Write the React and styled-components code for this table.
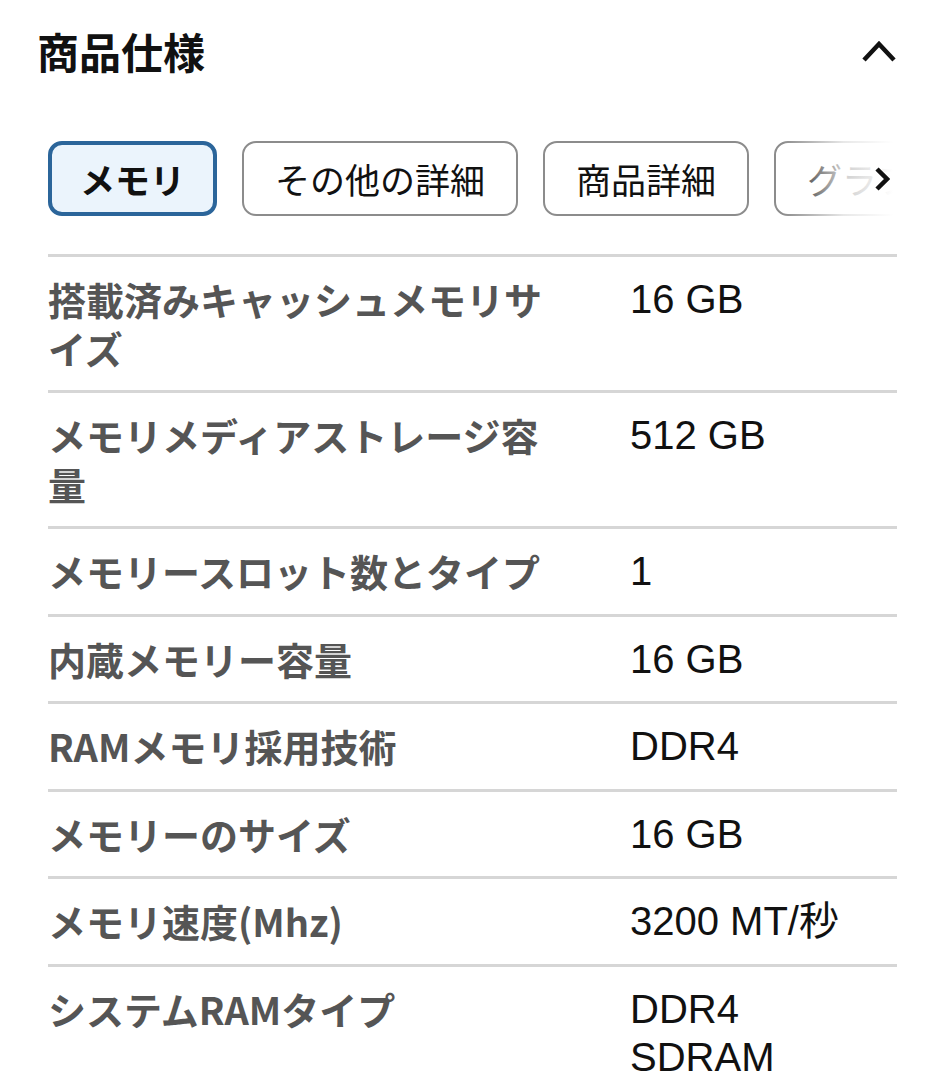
import React from "react";
import styled, { createGlobalStyle } from "styled-components";

const GlobalStyle = createGlobalStyle`
  html, body {
    margin: 0;
    padding: 0;
    background: #ffffff;
  }
  body {
    font-family: "Noto Sans CJK JP", "Noto Sans", sans-serif;
    color: #111111;
  }
`;

const Page = styled.div`
  width: 934px;
  box-sizing: border-box;
  padding: 0 37px 0 0;
`;

const Header = styled.div`
  display: flex;
  align-items: center;
  justify-content: space-between;
  height: 102px;
  padding-left: 37px;
`;

const Title = styled.h2`
  margin: 0;
  font-size: 42px;
  font-weight: 700;
  line-height: 1;
  color: #111111;
`;

const Body = styled.div`
  padding-left: 48px;
`;

const TabStrip = styled.div`
  position: relative;
  margin-top: 39px;
  width: 845px;
  overflow: hidden;
`;

const TabRow = styled.div`
  display: flex;
  gap: 25px;
  white-space: nowrap;
`;

const Tab = styled.button`
  flex: none;
  box-sizing: border-box;
  height: 75px;
  padding: 0 ${(p) => (p.$active ? "28px" : "31px")};
  border-radius: 14px;
  border: ${(p) => (p.$active ? "4px solid #2b659a" : "2px solid #8c8c8c")};
  background: ${(p) => (p.$active ? "#ebf4fc" : "#ffffff")};
  font-family: "Noto Sans CJK JP", sans-serif;
  font-size: 35px;
  font-weight: ${(p) => (p.$active ? 700 : 400)};
  color: #111111;
  line-height: 1;
`;

const Fade = styled.div`
  position: absolute;
  top: 0;
  right: 0;
  width: 110px;
  height: 100%;
  background: linear-gradient(to right, rgba(255, 255, 255, 0), rgba(255, 255, 255, 0.8) 55%, #ffffff 100%);
  display: flex;
  align-items: center;
  justify-content: flex-end;
  padding-right: 3px;
  box-sizing: border-box;
`;

const Table = styled.div`
  margin-top: 38px;
  width: 849px;
`;

const Row = styled.div`
  display: grid;
  grid-template-columns: 512px 240px;
  column-gap: 70px;
  padding: 18px 0;
  border-top: 3px solid #d6d6d6;
  line-height: 48.5px;
`;

const Label = styled.div`
  font-family: "Noto Sans CJK JP", sans-serif;
  font-size: 38px;
  font-weight: 700;
  color: #555555;
`;

const Value = styled.div`
  font-family: "Liberation Sans", "Noto Sans CJK JP", sans-serif;
  font-size: 40px;
  font-weight: 400;
  color: #111111;
`;

const rows = [
  ["搭載済みキャッシュメモリサイズ", "16 GB"],
  ["メモリメディアストレージ容量", "512 GB"],
  ["メモリースロット数とタイプ", "1"],
  ["内蔵メモリー容量", "16 GB"],
  ["RAMメモリ採用技術", "DDR4"],
  ["メモリーのサイズ", "16 GB"],
  ["メモリ速度(Mhz)", "3200 MT/秒"],
  ["システムRAMタイプ", "DDR4 SDRAM"],
];

const tabs = ["メモリ", "その他の詳細", "商品詳細", "グラフィックス"];

const ChevronUp = () => (
  <svg width="36" height="26" viewBox="0 0 36 26">
    <path d="M3 22 L18 6 L33 22" fill="none" stroke="#111" strokeWidth="4.5" />
  </svg>
);

const ChevronRight = () => (
  <svg width="16" height="26" viewBox="0 0 16 26">
    <path d="M3 3 L13 13 L3 23" fill="none" stroke="#111" strokeWidth="4.5" />
  </svg>
);

export default function App() {
  return (
    <Page>
      <GlobalStyle />
      <Header>
        <Title>商品仕様</Title>
        <ChevronUp />
      </Header>
      <Body>
        <TabStrip>
          <TabRow>
            {tabs.map((t, i) => (
              <Tab key={t} $active={i === 0}>
                {t}
              </Tab>
            ))}
          </TabRow>
          <Fade>
            <ChevronRight />
          </Fade>
        </TabStrip>
        <Table>
          {rows.map(([k, v]) => (
            <Row key={k}>
              <Label>{k}</Label>
              <Value>{v}</Value>
            </Row>
          ))}
        </Table>
      </Body>
    </Page>
  );
}
